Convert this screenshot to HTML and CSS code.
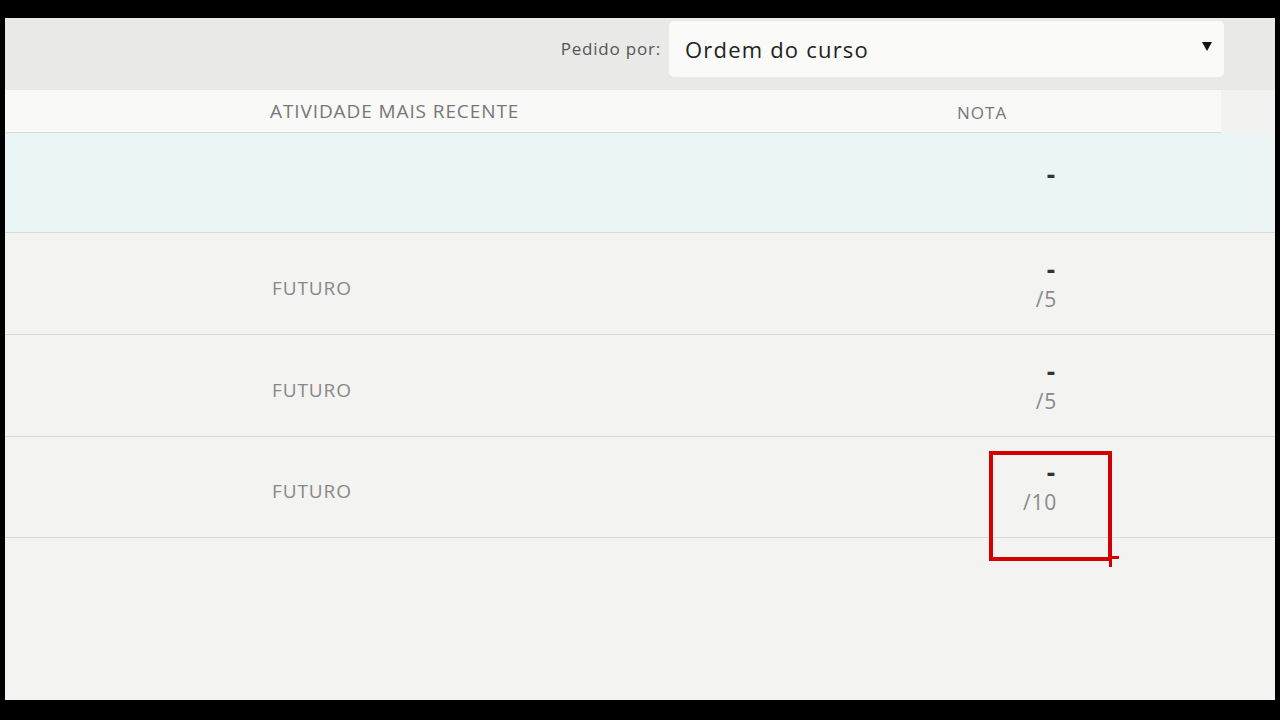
FILE: index.html
```html
<!DOCTYPE html>
<html lang="pt">
<head>
<meta charset="utf-8">
<title>Notas</title>
<link rel="stylesheet" href="styles.css">
</head>
<body>
<div class="screen">
  <div class="toolbar">
    <span class="sort-label">Pedido por:</span>
    <div class="select">
      <span class="select-value">Ordem do curso</span>
      <svg class="caret" width="10" height="9" viewBox="0 0 10 9"><path d="M0 0H10L5 9Z" fill="#111"/></svg>
    </div>
  </div>
  <div class="table">
    <div class="thead">
      <div class="thead-main">
        <div class="col-spacer"></div>
        <div class="col-activity th">ATIVIDADE MAIS RECENTE</div>
        <div class="col-grade th th-grade">NOTA</div>
      </div>
      <div class="thead-rest"></div>
    </div>
    <div class="row row-first row-highlight">
      <div class="col-spacer"></div>
      <div class="col-activity"></div>
      <div class="col-grade grade grade-single"><div class="dash">-</div></div>
    </div>
    <div class="row">
      <div class="col-spacer"></div>
      <div class="col-activity status">FUTURO</div>
      <div class="col-grade grade"><div class="dash">-</div><div class="outof">/5</div></div>
    </div>
    <div class="row">
      <div class="col-spacer"></div>
      <div class="col-activity status">FUTURO</div>
      <div class="col-grade grade"><div class="dash">-</div><div class="outof">/5</div></div>
    </div>
    <div class="row row-last">
      <div class="col-spacer"></div>
      <div class="col-activity status">FUTURO</div>
      <div class="col-grade grade">
        <div class="dash">-</div><div class="outof">/10</div>
        <span class="mark"><span class="mark-tick-h"></span><span class="mark-tick-v"></span></span>
      </div>
    </div>
  </div>
</div>
</body>
</html>
```
FILE: styles.css
```css
html, body {
  margin: 0;
  padding: 0;
  background: #000;
}
body {
  font-family: "Open Sans", "Liberation Sans", sans-serif;
  width: 1280px;
  height: 720px;
  overflow: hidden;
}
.screen {
  margin: 18px 5px 0 5px;
  height: 682px;
  background: #f3f3f1;
  display: flex;
  flex-direction: column;
  overflow: hidden;
}
.toolbar {
  height: 62px;
  padding-bottom: 10px;
  padding-right: 51px;
  background: #e9eae8;
  display: flex;
  justify-content: flex-end;
  align-items: center;
  gap: 8px;
}
.sort-label {
  font-size: 17px;
  letter-spacing: 0.8px;
  color: #555;
  margin-top: -2px;
}
.select {
  width: 555px;
  height: 56px;
  box-sizing: border-box;
  background: #fafbf9;
  border-radius: 5px;
  display: flex;
  align-items: center;
  justify-content: space-between;
  padding: 0 12px 0 16px;
}
.select-value {
  font-size: 22px;
  letter-spacing: 1.2px;
  color: #222;
}
.caret {
  margin-top: -5px;
}
.table {
  display: flex;
  flex-direction: column;
}
.thead {
  display: flex;
  background: #f2f3f1;
}
.thead-main {
  width: 1216px;
  height: 42px;
  background: #f9f9f7;
  border-bottom: 1px solid #d9dad8;
  display: flex;
  align-items: center;
}
.thead-rest {
  flex: 1;
}
.col-spacer {
  width: 265px;
  flex: none;
}
.col-activity {
  width: 680px;
  flex: none;
}
.col-grade {
  width: 106px;
  flex: none;
}
.th {
  color: #777;
  font-size: 19px;
  letter-spacing: 0.9px;
}
.th-grade {
  font-size: 17px;
  letter-spacing: 1px;
  padding-left: 7px;
  box-sizing: border-box;
  padding-top: 2px;
}
.row {
  height: 101px;
  border-bottom: 1px solid #d9dad8;
  display: flex;
  align-items: center;
}
.row-first {
  height: 99px;
}
.row-last {
  height: 100px;
}
.row-highlight {
  background: linear-gradient(90deg, #eaf5f6 0%, #eaf5f6 96%, #eef4f4 100%);
}
.status {
  font-size: 19px;
  letter-spacing: 0.9px;
  color: #888;
  padding-top: 8px;
  padding-left: 2px;
  box-sizing: border-box;
}
.grade {
  text-align: right;
  position: relative;
}
.grade-single {
  padding-bottom: 18px;
}
.dash {
  font-size: 26px;
  font-weight: 700;
  color: #333;
  line-height: 30px;
  padding-right: 1px;
}
.outof {
  font-size: 21px;
  letter-spacing: 0.8px;
  color: #8a8a8a;
  line-height: 30px;
  margin-right: -1px;
}
.mark {
  position: absolute;
  left: 39px;
  top: -6px;
  width: 115px;
  height: 102px;
  border: 4px solid #d40000;
}
.mark-tick-h {
  position: absolute;
  right: -11px;
  bottom: -2px;
  width: 8px;
  height: 3px;
  background: #d40000;
}
.mark-tick-v {
  position: absolute;
  right: -4px;
  bottom: -10px;
  width: 3px;
  height: 7px;
  background: #d40000;
}
```
